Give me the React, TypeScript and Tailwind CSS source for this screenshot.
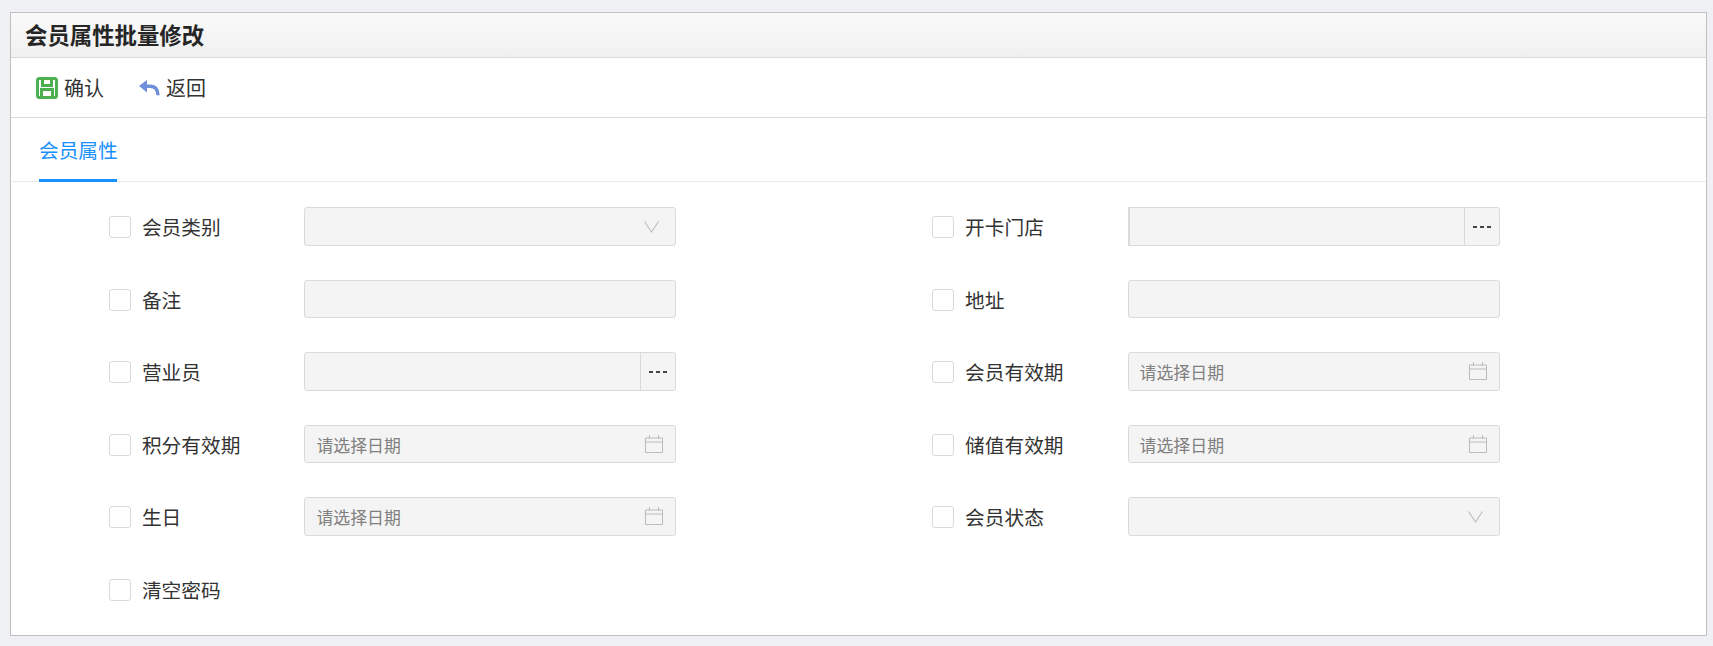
const font = { fontFamily: '"Noto Sans CJK SC", "Liberation Sans", sans-serif' };

function SaveIcon() {
  return (
    <svg width="22" height="22" viewBox="0 0 22 22" fill="none" className="shrink-0" stroke="#4caf50" strokeWidth="3">
      <rect x="1.500" y="1.500" width="19" height="19" rx="2" fill="#fff" />
      <path d="M6.500 2v6.500h9V2" />
      <path d="M5.500 21v-8.500h11V21" />
    </svg>
  );
}

function BackIcon() {
  return (
    <svg width="21" height="16" viewBox="0 0 21 16" fill="none" className="shrink-0">
      <path d="M0 6 8 0v12.500z" fill="#6f8fdc" />
      <path d="M6 6.200h5.500c4.500 0 7.300 3 7.500 9" stroke="#6f8fdc" strokeWidth="3.400" />
    </svg>
  );
}

function Chevron() {
  return (
    <svg width="15" height="12" viewBox="0 0 15 12" fill="none" className="absolute right-[16px] top-[12.500px]">
      <path d="M.5.500 7.500 11l7-10.500" stroke="#bdbdbd" strokeWidth="1.100" />
    </svg>
  );
}

function Calendar() {
  return (
    <svg width="18" height="18" viewBox="0 0 18 18" fill="none" className="absolute right-[12px] top-[9px]">
      <path d="M.5 3h17v14.500H.5zM.5 7h17" stroke="#bbb" />
      <path d="M4.500 0v4M13.500 0v4" stroke="#bbb" />
    </svg>
  );
}

type FieldKind = "select" | "text" | "picker" | "date" | "pickerWide";

function Field({ kind }: { kind: FieldKind }) {
  const thick = kind === "pickerWide";
  return (
    <div
      className={
        "relative flex h-[38.500px] w-[372px] items-center rounded-[3px] border border-[#dadada] bg-[#f4f4f4] " +
        (thick ? "rounded-l-none border-l-2" : "")
      }
    >
      {kind === "date" && <span className="mt-[1px] pl-[11px] text-[16.900px] text-[#808080]">请选择日期</span>}
      {kind === "select" && <Chevron />}
      {kind === "date" && <Calendar />}
      {(kind === "picker" || kind === "pickerWide") && (
        <div className="ml-auto flex h-full w-[35px] items-center justify-center border-l border-[#dadada]">
          <span className="flex gap-[3px]">
            <i className="h-[2px] w-[4px] bg-[#444]" />
            <i className="h-[2px] w-[4px] bg-[#444]" />
            <i className="h-[2px] w-[4px] bg-[#444]" />
          </span>
        </div>
      )}
    </div>
  );
}

function Row({ label, kind }: { label: string; kind?: FieldKind }) {
  return (
    <div className="flex h-[38.500px] items-center">
      <span className="mt-[1px] h-[22px] w-[22px] shrink-0 rounded-[3px] border border-[#d9d9d9] bg-white" />
      <span className="ml-[11px] mt-[1px] w-[162.500px] shrink-0 text-[19.700px] leading-none text-[#333]">{label}</span>
      {kind && <Field kind={kind} />}
    </div>
  );
}

const rows: { label: string; kind?: FieldKind }[] = [
  { label: "会员类别", kind: "select" },
  { label: "开卡门店", kind: "pickerWide" },
  { label: "备注", kind: "text" },
  { label: "地址", kind: "text" },
  { label: "营业员", kind: "picker" },
  { label: "会员有效期", kind: "date" },
  { label: "积分有效期", kind: "date" },
  { label: "储值有效期", kind: "date" },
  { label: "生日", kind: "date" },
  { label: "会员状态", kind: "select" },
  { label: "清空密码" },
];

export default function App() {
  return (
    <div className="min-h-screen bg-[#eef0f4] pb-[11px] pl-[10px] pr-[6px] pt-[12px]" style={font}>
      <div className="flex h-[624px] flex-col border border-[#c0c0c0] bg-white">
        <div className="flex h-[45px] shrink-0 items-center border-b border-[#d9d9d9] bg-gradient-to-b from-[#fafafa] to-[#f0f0f0] pl-[14px] text-[22.400px] font-bold text-[#262626]">
          会员属性批量修改
        </div>
        <div className="flex h-[60px] shrink-0 items-center gap-[35px] border-b border-[#d9d9d9] pl-[25px] text-[20px] text-[#333]">
          <button className="flex items-center gap-[6px]">
            <SaveIcon />
            确认
          </button>
          <button className="flex items-center gap-[6px]">
            <BackIcon />
            返回
          </button>
        </div>
        <div className="flex h-[64px] shrink-0 border-b border-[#eaeaea] pl-[28px]">
          <div className="-mb-px flex h-[64px] w-[78px] items-center whitespace-nowrap border-b-[3px] border-[#1890ff] pt-[2px] text-[19.700px] text-[#1890ff]">
            会员属性
          </div>
        </div>
        <div className="grid grid-cols-[823.200px_1fr] auto-rows-[72.500px] pl-[97.900px] pt-[25.300px]">
          {rows.map((r) => (
            <Row key={r.label} label={r.label} kind={r.kind} />
          ))}
        </div>
      </div>
    </div>
  );
}
